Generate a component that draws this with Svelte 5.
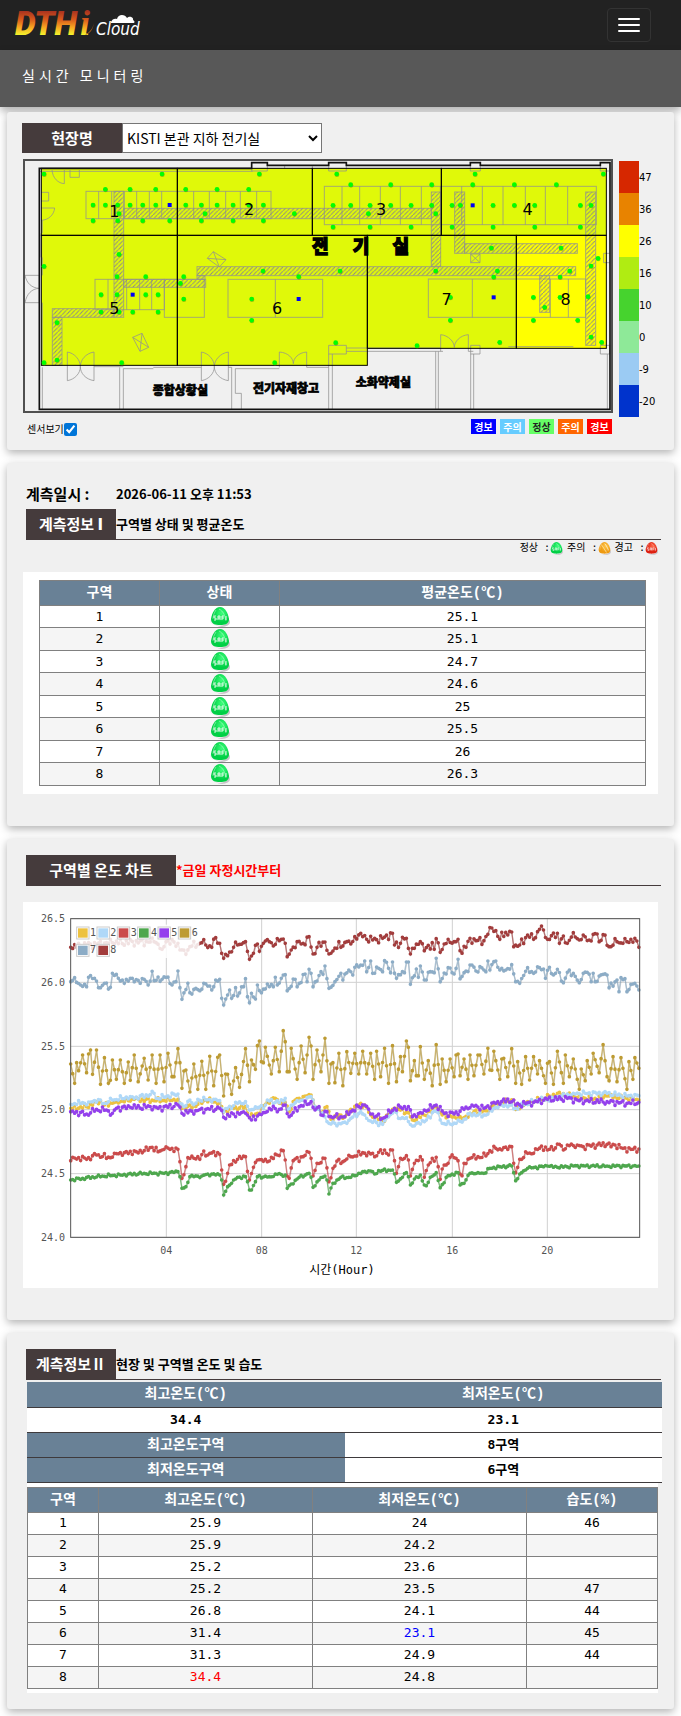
<script>
  let site = 'kisti';
  let showSensors = true;

  const scale = [
    { label: '47', color: '#d62700' },
    { label: '36', color: '#e88300' },
    { label: '26', color: '#ffff00' },
    { label: '16', color: '#b0ec12' },
    { label: '10', color: '#46d32e' },
    { label: '0', color: '#8ee998' },
    { label: '-9', color: '#9bcbf3' },
    { label: '-20', color: '#0033cc' }
  ];

  const levels = [
    { label: '경보', bg: '#0000ff', fg: '#fff' },
    { label: '주의', bg: '#66ccff', fg: '#fff' },
    { label: '정상', bg: '#66ff66', fg: '#222' },
    { label: '주의', bg: '#ff6600', fg: '#fff' },
    { label: '경보', bg: '#ff0000', fg: '#fff' }
  ];

  // x, y, width, height, number x, number y
  const zones = [
    [94, 55, 408, 201, 313, 202],
    [502, 55, 405, 201, 717, 195],
    [907, 55, 387, 201, 1113, 195],
    [1294, 55, 495, 201, 1553, 195],
    [94, 256, 408, 390, 313, 491],
    [502, 256, 570, 390, 801, 491],
    [1072, 256, 447, 339, 1310, 465],
    [1519, 256, 270, 339, 1667, 465]
  ];

  const ducts = [
    [312, 124, 29, 378], [341, 175, 923, 31], [1264, 126, 28, 224], [561, 350, 1136, 27],
    [341, 388, 246, 24], [561, 377, 24, 11], [127, 476, 185, 26], [127, 502, 29, 144],
    [1334, 126, 30, 184], [1364, 281, 338, 29], [1727, 126, 30, 460], [1589, 377, 30, 110]
  ];

  // x, y, width, height, dividers
  const cabinets = [
    [228, 124, 555, 82, [266, 305, 343, 380, 418, 455, 503, 551, 598, 647, 691, 740]],
    [943, 109, 816, 115, [996, 1049, 1111, 1171, 1234, 1291, 1355, 1417, 1479, 1546, 1606, 1673]],
    [255, 388, 208, 91, [294, 350, 389, 425]],
    [463, 388, 120, 114, []],
    [654, 388, 284, 114, [796]],
    [1255, 387, 472, 115, [1387, 1621, 1675]]
  ];

  const sensors = [
    [102, 72], [456, 72], [748, 72], [980, 72], [286, 118], [360, 118], [437, 118], [527, 118],
    [621, 118], [716, 118], [249, 165], [286, 165], [323, 165], [360, 165], [398, 165], [437, 165],
    [527, 165], [574, 165], [621, 165], [669, 165], [716, 165], [760, 165], [327, 191], [585, 191],
    [853, 191], [249, 212], [323, 212], [398, 212], [479, 212], [574, 212], [669, 212], [760, 212],
    [969, 166], [969, 231], [327, 313], [102, 349], [321, 380], [407, 380], [521, 380], [759, 363],
    [990, 363], [866, 380], [511, 400], [273, 434], [321, 434], [407, 434], [444, 434], [521, 447],
    [725, 447], [273, 486], [327, 486], [368, 486], [444, 486], [141, 518], [725, 511], [977, 578],
    [141, 630], [102, 638], [335, 638], [794, 638], [1022, 104], [1142, 104], [1265, 104], [1388, 104],
    [1513, 104], [1639, 104], [1395, 72], [1780, 72], [1022, 166], [1080, 166], [1142, 166], [1203, 166],
    [1265, 166], [1326, 166], [1351, 166], [1449, 166], [1513, 166], [1574, 166], [1711, 166], [1743, 166],
    [1075, 191], [1277, 191], [1080, 231], [1203, 231], [1326, 231], [1449, 231], [1574, 231], [1711, 231],
    [1444, 294], [1653, 294], [1764, 325], [1743, 348], [1277, 363], [1462, 363], [1679, 363], [1451, 381],
    [1650, 381], [1321, 442], [1570, 442], [1650, 442], [1734, 440], [1604, 472], [1321, 511], [1570, 511],
    [1703, 511], [1743, 561], [1469, 577], [1775, 577], [1221, 587]
  ];

  const humiditySensors = [[479, 165], [368, 434], [866, 447], [1388, 166], [1451, 442]];

  const averages = ['25.1', '25.1', '24.7', '24.6', '25', '25.5', '26', '26.3'];

  const details = [
    ['25.9', '24', '46'],
    ['25.9', '24.2', ''],
    ['25.2', '23.6', ''],
    ['25.2', '23.5', '47'],
    ['26.8', '24.1', '44'],
    ['31.4', '23.1', '45'],
    ['31.3', '24.9', '44'],
    ['34.4', '24.8', '']
  ];

  // turning points of each curve as "x,y", filled up to one sample per 5 minutes
  const series = [
    { color: '#edc240', noise: 5, keys: '152,655 200,650 240,632 255,645 290,635 340,628 400,632 475,628 485,655 520,648 560,630 600,638 612,665 640,655 678,650 690,682 715,670 740,635 768,625 780,640 797,638 808,665 825,630 850,620 875,615 885,650 910,665 922,650 930,688 960,675 975,680 990,658 1015,645 1035,645 1050,675 1090,692 1125,655 1165,668 1175,690 1210,675 1250,650 1265,675 1305,680 1330,683 1360,665 1400,662 1430,640 1480,630 1490,658 1520,635 1560,630 1610,610 1660,618 1720,628 1760,618 1820,625 1857,630' },
    { color: '#afd8f8', noise: 5, keys: '152,643 190,638 200,645 215,635 240,630 255,640 280,630 330,620 345,625 400,610 410,625 475,612 482,640 490,650 510,630 520,645 535,628 555,630 580,628 600,632 612,665 620,655 655,640 678,635 690,660 700,658 735,645 745,630 780,638 795,625 803,660 825,638 850,630 875,620 885,650 915,680 925,700 955,700 980,700 990,685 1020,665 1035,675 1050,693 1090,703 1105,680 1125,663 1135,685 1160,683 1175,708 1190,700 1220,690 1240,663 1252,668 1265,700 1290,702 1310,700 1330,688 1350,670 1375,675 1400,675 1420,655 1440,645 1470,645 1490,655 1510,645 1550,630 1600,625 1660,610 1760,610 1820,618 1857,617' },
    { color: '#cb4b4b', noise: 6, keys: '152,812 160,802 200,808 230,795 270,803 285,790 310,788 350,785 375,782 398,772 415,785 430,778 455,775 474,778 480,815 487,865 495,830 505,803 535,800 540,808 552,783 565,795 580,785 600,793 606,840 612,883 620,850 630,825 655,808 678,800 690,870 702,832 715,810 740,815 770,795 790,782 797,810 803,858 809,865 820,812 850,800 868,787 874,805 880,858 893,820 915,805 928,875 940,835 955,808 970,815 990,800 1005,798 1028,788 1040,797 1055,790 1065,800 1075,787 1095,780 1107,795 1118,780 1124,812 1130,850 1142,805 1155,805 1160,797 1166,810 1172,858 1185,820 1202,800 1210,830 1214,862 1225,825 1250,802 1256,830 1261,868 1273,825 1285,820 1290,802 1310,805 1316,812 1321,852 1327,857 1335,820 1350,805 1375,800 1395,798 1410,782 1430,775 1445,780 1477,770 1482,820 1488,848 1500,808 1520,790 1540,790 1565,768 1580,780 1592,770 1603,780 1617,763 1630,780 1643,765 1670,765 1690,770 1730,765 1760,763 1775,770 1788,765 1810,775 1830,778 1857,777' },
    { color: '#4da74d', noise: 3, keys: '152,870 190,865 250,858 300,855 370,850 430,850 474,845 480,860 487,895 495,890 510,860 545,858 565,852 600,855 606,870 612,915 620,890 640,870 650,862 678,860 684,875 690,900 696,900 705,875 715,860 750,860 770,853 797,855 803,895 815,882 835,862 868,850 875,862 880,892 895,870 915,858 922,870 928,912 940,880 960,862 990,862 1005,857 1030,845 1050,843 1065,852 1075,842 1118,840 1124,852 1130,877 1145,862 1160,848 1166,860 1172,885 1185,867 1202,855 1214,885 1220,887 1230,862 1250,848 1261,893 1285,857 1315,848 1321,885 1330,880 1350,850 1375,848 1390,850 1410,835 1440,830 1475,828 1482,848 1488,872 1505,848 1523,835 1580,828 1610,832 1660,828 1760,828 1857,828' },
    { color: '#9440ed', noise: 6, keys: '152,665 200,672 230,658 260,660 275,670 290,655 330,652 400,650 415,655 475,645 487,670 530,662 560,658 600,655 612,682 640,672 675,670 695,690 715,678 730,668 750,655 780,658 795,645 808,680 835,650 875,635 885,660 895,650 905,675 920,665 930,680 975,680 990,665 1015,650 1035,645 1050,672 1090,685 1125,655 1165,650 1175,680 1200,668 1250,645 1270,670 1305,672 1330,658 1357,645 1390,655 1435,635 1480,630 1490,645 1540,637 1580,628 1640,625 1680,632 1760,635 1820,640 1857,637' },
    { color: '#bd9b33', noise: 0, keys: '152,522 165,580 171,518 177,542 189,495 201,548 207,492 213,480 219,553 230,480 242,583 254,503 266,580 273,571 279,510 290,568 302,510 312,580 324,516 332,571 344,495 356,575 372,505 384,570 397,495 409,580 421,495 433,575 445,490 457,560 463,560 475,476 481,518 487,595 493,543 499,540 511,606 523,522 535,598 546,514 557,598 570,499 582,587 594,502 600,495 612,618 618,552 625,553 636,613 648,533 660,592 678,476 690,575 696,510 708,538 714,467 719,453 725,515 731,518 737,472 755,552 767,472 778,545 790,422 797,455 803,545 809,545 815,475 833,568 845,468 857,548 868,442 874,468 880,568 892,480 904,545 916,445 928,580 934,522 940,518 946,578 958,490 970,587 982,485 993,550 1005,490 1017,552 1029,484 1041,552 1053,490 1065,568 1071,484 1083,560 1095,475 1107,580 1118,467 1131,575 1143,500 1148,545 1160,453 1166,472 1172,572 1184,512 1190,557 1196,557 1202,470 1214,568 1226,512 1238,587 1250,464 1261,583 1267,507 1279,575 1291,507 1303,560 1309,495 1315,492 1321,557 1333,507 1345,568 1351,495 1363,557 1375,495 1380,495 1392,552 1404,475 1410,540 1416,541 1422,484 1440,568 1446,507 1452,505 1464,560 1476,476 1488,580 1494,515 1506,583 1518,500 1530,570 1542,500 1554,552 1560,512 1577,580 1583,520 1589,515 1600,583 1613,484 1631,580 1637,495 1650,560 1660,507 1678,598 1684,537 1697,572 1703,512 1715,552 1721,490 1739,548 1750,464 1763,560 1768,572 1780,500 1792,575 1804,503 1822,598 1828,515 1840,568 1846,503 1857,535' },
    { color: '#8cacc6', noise: 6, keys: '152,275 165,263 182,285 200,290 207,262 225,265 242,293 255,280 272,292 279,250 295,265 315,280 330,265 345,275 370,268 385,285 397,244 405,272 440,262 455,285 470,275 475,243 480,293 487,328 505,280 511,308 530,295 542,302 552,280 570,288 576,300 590,270 600,268 606,325 612,345 620,315 630,300 636,325 648,293 655,318 672,290 678,266 684,320 690,338 696,310 708,327 714,285 726,308 745,282 757,290 768,262 772,285 790,255 797,254 803,302 825,268 833,290 855,252 860,275 868,238 875,250 880,290 893,273 900,245 910,253 916,228 928,295 945,275 960,250 970,270 985,240 998,255 1005,232 1020,225 1035,213 1042,245 1053,213 1058,250 1075,235 1088,245 1095,212 1112,248 1120,216 1130,265 1145,245 1155,248 1160,216 1166,216 1172,283 1190,237 1196,262 1202,228 1215,270 1230,245 1245,248 1250,205 1262,275 1285,233 1303,252 1315,208 1322,266 1335,248 1357,225 1370,243 1380,230 1395,245 1405,213 1410,240 1420,215 1430,213 1440,240 1455,240 1477,224 1488,275 1500,280 1523,233 1540,250 1558,233 1572,237 1577,265 1588,232 1600,255 1615,238 1630,278 1640,247 1660,250 1678,278 1690,250 1702,247 1713,275 1720,250 1728,275 1750,253 1762,255 1768,293 1790,270 1798,305 1804,263 1815,266 1822,305 1830,283 1845,280 1857,300' },
    { color: '#a23c3c', noise: 8, keys: '152,172 200,165 280,158 400,155 410,158 425,178 440,155 475,160 482,180 498,193 510,170 545,158 557,165 575,172 588,143 600,160 612,205 625,197 640,172 655,165 670,158 678,155 688,208 700,190 713,162 718,184 730,160 750,155 758,168 775,152 790,147 797,160 803,200 815,180 833,155 850,160 868,140 880,192 892,172 916,156 925,192 940,183 955,155 965,172 980,155 995,162 1005,140 1022,130 1040,148 1060,150 1090,145 1118,130 1125,165 1140,160 1150,142 1160,145 1172,192 1185,175 1202,155 1215,182 1237,158 1243,178 1250,146 1260,187 1285,148 1305,155 1315,148 1322,182 1338,172 1350,145 1370,152 1390,152 1405,133 1417,114 1430,122 1440,148 1445,127 1465,135 1477,126 1482,170 1500,165 1522,135 1540,148 1560,118 1572,120 1580,148 1595,137 1613,130 1620,160 1630,138 1640,160 1657,128 1675,150 1690,135 1710,150 1732,132 1740,155 1752,134 1765,170 1790,155 1810,160 1845,145 1857,172' }
  ].map((s, n) => {
    const keys = s.keys.split(' ').map((pair) => {
      const [x, y] = pair.split(',').map(Number);
      return [Math.round((x - 152) / 5.96), y];
    });
    const points = [];
    let k = 0;
    for (let i = 0; i < 287; i++) {
      while (k < keys.length - 2 && keys[k + 1][0] <= i) k++;
      const [i0, y0] = keys[k];
      const [i1, y1] = keys[k + 1];
      const t = i1 > i0 ? Math.min(1, (i - i0) / (i1 - i0)) : 1;
      const onKey = i === i0 || i === i1;
      const wave = onKey ? 0 : Math.sin(i * 2.4 + n) + Math.sin(i * 5.1 + n * 3) * 0.6;
      points.push([(152 + i * 5.96).toFixed(1), (y0 + (y1 - y0) * t + wave * s.noise).toFixed(1)]);
    }
    return {
      color: s.color,
      line: 'M' + points.map((p) => p.join(' ')).join('L'),
      dots: points.map((p) => `M${p[0]} ${p[1]}h0`).join('')
    };
  });

  const hours = [['04', 439], ['08', 725], ['12', 1009], ['16', 1297], ['20', 1582]];
  const temps = [['26.5', 86], ['26.0', 277], ['25.5', 469], ['25.0', 659], ['24.5', 851], ['24.0', 1042]];
</script>

{#snippet status(kind)}
  <svg class="status" viewBox="0 0 20 20" role="img" aria-label={kind}>
    <ellipse cx="12" cy="15" rx="8" ry="5" fill="#c9c4c9" />
    <ellipse cx="9" cy="14" rx="9" ry="5" fill="#f4f2f5" />
    <path d="M10 0C5 0 2 6 1 12C1 17 5 18 10 18S19 17 19 12C18 6 15 0 10 0Z" fill="url(#egg-{kind})" />
    <path d="M6 3C4 6 3 9 3 12M9 2C13 4 15 8 16 14" fill="none" stroke="#fff" stroke-opacity=".4" />
    {#if kind === 'caution'}
      <path d="M6 5L13 16M11 3L16 12" stroke="#fff1c4" fill="none" />
    {:else}
      <path d="M6 9H4v2h2v2H4M8 13v-4h2v4M8 11h2M12 9v4M12 9h2M12 11h2M16 9v4" stroke="#fff" stroke-opacity=".85" fill="none" />
    {/if}
  </svg>
{/snippet}

<svg class="defs" aria-hidden="true">
  <defs>
    <radialGradient id="egg-normal" cx=".6" cy=".35"><stop offset="0" stop-color="#3cff7a" /><stop offset="1" stop-color="#00cf45" /></radialGradient>
    <radialGradient id="egg-caution" cx=".6" cy=".35"><stop offset="0" stop-color="#ffc54a" /><stop offset="1" stop-color="#ee9a10" /></radialGradient>
    <radialGradient id="egg-warning" cx=".6" cy=".35"><stop offset="0" stop-color="#ff6a4a" /><stop offset="1" stop-color="#dd1f10" /></radialGradient>
  </defs>
</svg>

<header class="navbar">
  <a class="brand" href="#home" aria-label="DTHi Cloud">
    <svg width="136" height="50" viewBox="0 0 136 50">
      <defs>
        <linearGradient id="fire" gradientUnits="userSpaceOnUse" x1="0" y1="11" x2="0" y2="36">
          <stop offset="0" stop-color="#a8321f" />
          <stop offset=".35" stop-color="#d95b1c" />
          <stop offset=".65" stop-color="#f7a521" />
          <stop offset="1" stop-color="#f2ff2e" />
        </linearGradient>
      </defs>
      <text x="4" y="35" class="brand-main" fill="url(#fire)">DTH</text>
      <text x="69" y="35" class="brand-i" fill="url(#fire)">i</text>
      <path d="M75 34C79 32 82 28 83 23C82 29 79 34 74 35Z" fill="#b8641c" />
      <text x="85" y="35" class="brand-sub" fill="#fff">Cloud</text>
      <path d="M100 22C101 19 104 18 106 19C107 14 114 14 116 18C119 15 123 18 122 20C124 21 124 23 122 23H100Z" fill="#fff" />
    </svg>
  </a>
  <button class="toggle" type="button" aria-label="메뉴">
    <span></span><span></span><span></span>
  </button>
</header>

<div class="page-title"><h1>실시간 모니터링</h1></div>

<main>
  <section class="card plan-card">
    <div class="site">
      <label for="site">현장명</label>
      <select id="site" bind:value={site}>
        <option value="kisti">KISTI 본관 지하 전기실</option>
      </select>
    </div>

    <div class="plan-row">
      <div class="plan-col">
        <svg class="plan" viewBox="45 33 1758 750">
          <defs>
            <pattern id="hatch" width="13" height="13" patternUnits="userSpaceOnUse">
              <path d="M0 13L13 0" stroke="#8f8f80" stroke-width="3" />
            </pattern>
          </defs>

          {#each zones as [x, y, width, height], i}
            <rect {x} {y} {width} {height} fill={i === 7 ? '#ffff00' : '#e0f909'} />
          {/each}

          <g class="thin">
            {#each cabinets as [x, y, width, height, dividers]}
              <rect {x} {y} {width} {height} />
              {#each dividers as d}
                <path d="M{d} {y}v{height}" />
              {/each}
            {/each}
            {#each ducts as [x, y, width, height]}
              <rect {x} {y} {width} {height} class="duct" />
            {/each}
            <path d="M126 60C128 85 145 100 163 101V60M180 60v22h28V60M94 127h22v26H94M94 174h40C132 195 115 210 94 211M97 211v38M97 322v54M97 458v188" />
            <path d="M94 250v72" stroke-width="5" />
            <path d="M45 376h43v82H45M45 376C50 400 65 414 88 415C65 416 50 432 45 458" />
            <path d="M172 606v86M252 606v86M172 606C195 610 211 630 211 650C211 670 195 688 172 692M252 606C227 610 211 630 211 650C211 670 227 688 252 692" />
            <path d="M574 606v86M655 606v86M574 606C597 610 613 630 613 650C613 670 597 688 574 692M655 606C630 610 613 630 613 650C613 670 630 688 655 692" />
            <path d="M808 652v-46C835 608 850 625 850 641C850 625 865 608 890 606v46h66" />
            <path d="M1292 604v-50C1315 556 1333 575 1333 592C1333 575 1350 556 1375 554v50" />
            <path d="M592 325l18-20 38 24-20 22zM592 325l56 4M610 305l18 46M368 562l28-12 20 42-26 12zM368 562l48 30M396 550l-6 54M1382 312h28v26h-28zM1382 312l28 26M1410 312l-28 26" />
            <path d="M97 652v126M329 652v126M340 656v122M252 650h88M340 656h90M430 652h144M655 652h10v126M676 656v74h18v48M676 656h132M956 778V586h53v26h-53M967 612v166M1009 594h283M1009 604h290M1277 604v174M1285 604v174M1382 612v166M1391 612v166M1382 586h28v26h-28zM1771 586h28v26h-28zM1799 310h-18v28h18M1792 612v166M1375 604h15" />
            <path d="M88 64h640M824 46v9M907 46v9M725 55v8h47v-17M956 46v17h53V46M1381 46v17h30V46M1771 46v17h28" />
            <path d="M1495 590h195" />
          </g>

          <g class="room">
            <text x="931" y="309" class="room-big">전</text>
            <text x="1053" y="309" class="room-big">기</text>
            <text x="1172" y="309" class="room-big">실</text>
            <text x="511" y="734">종합상황실</text>
            <text x="828" y="730">전기자재창고</text>
            <text x="1120" y="711">소화약제실</text>
          </g>

          {#each zones as [x, y, width, height]}
            <rect {x} {y} {width} {height} fill="none" stroke="#000" stroke-width="3" />
          {/each}
          <path d="M88 55H725V38H772V46H956V38H1009V46H1381V38H1411V46H1771V38H1800V778H88Z" fill="none" stroke="#111" stroke-width="5" />
          {#if showSensors}
            {#each sensors as [cx, cy]}
              <circle cx={cx + 1} cy={cy + 2} r="7" fill="#5b8a00" opacity=".5" />
              <circle {cx} {cy} r="7" fill="#00ff00" />
            {/each}
            {#each humiditySensors as [x, y]}
              <rect x={x - 6} y={y - 6} width="12" height="12" fill="#0000f5" />
            {/each}
          {/if}
          {#each zones as [, , , , x, y], i}
            <text {x} {y} class="zone-no">{i + 1}</text>
          {/each}
        </svg>

        <div class="plan-foot">
          <div class="sensor-toggle">
            <label for="sensors">센서보기</label>
            <input id="sensors" type="checkbox" bind:checked={showSensors} />
          </div>
          <div class="levels">
            {#each levels as level}
              <span style="background: {level.bg}; color: {level.fg}">{level.label}</span>
            {/each}
          </div>
        </div>
      </div>

      <ul class="scale">
        {#each scale as step}
          <li><i style="background: {step.color}"></i>{step.label}</li>
        {/each}
      </ul>
    </div>
  </section>

  <section class="card">
    <p class="measured"><span>계측일시 :</span><time>2026-06-11 오후 11:53</time></p>
    <div class="head">
      <h2>계측정보 <span class="numeral">Ⅰ</span></h2>
      <p>구역별 상태 및 평균온도</p>
    </div>
    <div class="status-key">
      <span>정상 :</span>{@render status('normal')}
      <span>주의 :</span>{@render status('caution')}
      <span>경고 :</span>{@render status('warning')}
    </div>
    <div class="panel zone-panel">
      <table class="grid zone-table">
        <thead>
          <tr><th>구역</th><th>상태</th><th>평균온도(℃)</th></tr>
        </thead>
        <tbody>
          {#each averages as temp, i}
            <tr>
              <td>{i + 1}</td>
              <td>{@render status('normal')}</td>
              <td>{temp}</td>
            </tr>
          {/each}
        </tbody>
      </table>
    </div>
  </section>

  <section class="card">
    <div class="head">
      <h2 class="wide">구역별 온도 차트</h2>
      <p class="note">*금일 자정시간부터</p>
    </div>
    <div class="panel chart-panel">
      <svg class="chart" viewBox="9 36 1905 1158">
        {#each hours as [label, x]}
          <path d="M{x} 86V1042" class="gridline" />
          <text {x} y="1092" text-anchor="middle">{label}</text>
        {/each}
        {#each temps as [label, y]}
          <path d="M152 {y}H1859" class="gridline" />
          <text x="135" y={y + 11} text-anchor="end">{label}</text>
        {/each}
        {#each series as s}
          <path d={s.line} fill="none" stroke="#000" stroke-opacity=".15" stroke-width="4" transform="translate(1 3)" />
          <path d={s.line} fill="none" stroke={s.color} stroke-opacity=".65" stroke-width="4" />
          <path d={s.dots} fill="none" stroke={s.color} stroke-width="11" stroke-linecap="round" />
        {/each}
        <rect x="152" y="86" width="1707" height="956" fill="none" stroke="#545454" stroke-width="3" />
        <rect x="166" y="104" width="372" height="100" fill="#fff" fill-opacity=".85" />
        {#each series as s, i}
          <rect x={170 + (i % 6) * 61} y={i < 6 ? 111 : 163} width="37" height="36" fill="#fff" stroke="#ccc" stroke-width="3" />
          <rect x={174 + (i % 6) * 61} y={i < 6 ? 115 : 167} width="29" height="28" fill={s.color} />
          <text x={210 + (i % 6) * 61} y={i < 6 ? 138 : 189}>{i + 1}</text>
        {/each}
        <text x="966" y="1152" text-anchor="middle" class="axis-title">시간(Hour)</text>
      </svg>
    </div>
  </section>

  <section class="card">
    <div class="head">
      <h2>계측정보Ⅱ</h2>
      <p>현장 및 구역별 온도 및 습도</p>
    </div>
    <table class="summary">
      <tbody>
        <tr><th>최고온도(℃)</th><th>최저온도(℃)</th></tr>
        <tr><td>34.4</td><td>23.1</td></tr>
        <tr><th>최고온도구역</th><td>8구역</td></tr>
        <tr><th>최저온도구역</th><td>6구역</td></tr>
      </tbody>
    </table>
    <div class="detail-panel">
      <table class="grid detail-table">
        <thead>
          <tr><th>구역</th><th>최고온도(℃)</th><th>최저온도(℃)</th><th>습도(%)</th></tr>
        </thead>
        <tbody>
          {#each details as [high, low, humidity], i}
            <tr>
              <td>{i + 1}</td>
              <td class:hot={high === '34.4'}>{high}</td>
              <td class:cold={low === '23.1'}>{low}</td>
              <td>{humidity}</td>
            </tr>
          {/each}
        </tbody>
      </table>
    </div>
  </section>
</main>

<style>
  :global(body) {
    background: #fff;
    color: #000;
    font-family: "Noto Sans CJK KR", sans-serif;
    font-size: 14px;
    line-height: 20px;
  }

  h1, h2, p, ul {
    margin: 0;
    padding: 0;
  }

  .defs {
    position: absolute;
    width: 0;
    height: 0;
  }

  .navbar {
    display: flex;
    justify-content: space-between;
    align-items: center;
    height: 50px;
    padding: 0 30px 0 11px;
    background: #222;
  }

  .brand svg {
    display: block;
  }

  .brand-main {
    font: italic 900 33px Roboto, sans-serif;
  }

  .brand-i {
    font: italic bold 36px "Liberation Serif", serif;
  }

  .brand-sub {
    font: italic 18px "DejaVu Sans Condensed", "Open Sans", sans-serif;
    font-size: 17px;
  }

  .toggle {
    display: flex;
    flex-direction: column;
    gap: 4px;
    padding: 9px 10px;
    border: 1px solid #333;
    border-radius: 4px;
    background: transparent;
    cursor: pointer;
  }

  .toggle span {
    width: 22px;
    height: 2px;
    border-radius: 1px;
    background: #fff;
  }

  .page-title {
    height: 57px;
    padding: 0 22px;
    background: #585858;
    box-shadow: 0 4px 8px rgba(0, 0, 0, 0.3);
  }

  .page-title h1 {
    color: #fff;
    font-size: 14px;
    font-weight: normal;
    line-height: 50px;
    letter-spacing: 4px;
  }

  main {
    display: flex;
    flex-direction: column;
    gap: 13px;
    padding: 5px 7px 7px;
  }

  .card {
    padding: 16px 13px 32px 19px;
    border-radius: 3px;
    background: #f0f0f0;
    box-shadow: 0 3px 8px rgba(0, 0, 0, 0.3);
  }

  .plan-card {
    padding: 11px 15px 14px;
  }

  .site {
    display: flex;
    margin-bottom: 6px;
  }

  .site label {
    width: 100px;
    background: #453b3c;
    color: #fff;
    font-size: 15px;
    font-weight: bold;
    line-height: 30px;
    text-align: center;
  }

  .site select {
    width: 200px;
    height: 30px;
    border: 1px solid #767676;
    border-radius: 0;
    background: #fff;
    color: #000;
    font: 14px "Noto Sans CJK KR", sans-serif;
  }

  .plan-row {
    display: flex;
    gap: 6px;
    margin-left: 1px;
  }

  .plan-col {
    flex: 1;
    min-width: 0;
  }

  .plan {
    display: block;
    box-sizing: border-box;
    width: 100%;
    border: 2px solid #505050;
  }

  .thin {
    fill: none;
    stroke: #909090;
    stroke-opacity: 0.75;
    stroke-width: 3;
  }

  .duct {
    fill: url(#hatch);
  }

  .room {
    font: 900 36px "Noto Sans CJK KR", sans-serif;
    text-anchor: middle;
    stroke: #000;
    stroke-width: 2;
  }

  .room-big {
    font-size: 54px;
    stroke-width: 4;
  }

  .zone-no {
    font: 48px "DejaVu Sans", sans-serif;
    text-anchor: middle;
  }

  .plan-foot {
    display: flex;
    justify-content: space-between;
    align-items: flex-start;
    margin-top: 6px;
    padding: 0 1px 0 4px;
  }

  .sensor-toggle {
    display: flex;
    align-items: center;
    padding-top: 3px;
    font-size: 10px;
    line-height: 14px;
  }

  .sensor-toggle input {
    width: 13px;
    height: 13px;
    margin: 0;
    accent-color: #0075d8;
  }

  .levels {
    display: flex;
    gap: 4px;
  }

  .levels span {
    width: 25px;
    font-size: 10px;
    font-weight: bold;
    line-height: 15px;
    text-align: center;
  }

  .scale {
    width: 40px;
    padding-top: 2px;
    list-style: none;
  }

  .scale li {
    display: flex;
    align-items: center;
    height: 32px;
    font: 10px "DejaVu Sans", sans-serif;
  }

  .scale i {
    width: 20px;
    height: 32px;
  }

  .measured {
    display: flex;
    margin-bottom: 5px;
    padding-top: 5px;
    font-weight: bold;
  }

  .measured span {
    width: 90px;
    font-size: 15px;
  }

  .measured time {
    font-size: 13px;
  }

  .head {
    display: flex;
    border-bottom: 1px solid #453b3c;
  }

  .head h2 {
    width: 90px;
    background: #453b3c;
    color: #fff;
    font-size: 15px;
    line-height: 30px;
    text-align: center;
    white-space: nowrap;
  }

  .head h2.wide {
    width: 150px;
  }

  .numeral {
    font-family: "DejaVu Sans", sans-serif;
    line-height: 20px;
  }

  .head p {
    font-size: 13px;
    font-weight: bold;
    line-height: 30px;
  }

  .head .note {
    color: #f00;
  }

  .status {
    width: 20px;
    height: 20px;
    vertical-align: top;
  }

  .status-key {
    display: flex;
    justify-content: flex-end;
    align-items: center;
    height: 16px;
    padding-right: 3px;
    font-family: "DejaVu Sans Mono", "Noto Sans CJK KR", monospace;
    font-size: 10px;
  }

  .status-key span {
    margin-left: 4px;
  }

  .status-key .status {
    width: 13px;
    height: 13px;
  }

  .panel {
    margin: 16px 3px 0 -3px;
    background: #fff;
  }

  .zone-panel {
    padding: 8px 12px 8px 16px;
  }

  .chart {
    display: block;
    width: 100%;
    font: 30px "DejaVu Sans Mono", monospace;
    fill: #545454;
  }

  .gridline {
    fill: none;
    stroke: #d0d0d0;
    stroke-width: 3;
  }

  .axis-title {
    font: 36px "DejaVu Sans Mono", "Noto Sans CJK KR", monospace;
    fill: #000;
  }

  table {
    width: 100%;
    border-collapse: collapse;
    table-layout: fixed;
    text-align: center;
    font-family: "DejaVu Sans Mono", "Noto Sans CJK KR", monospace;
    font-size: 13px;
    line-height: 20px;
  }

  th, td {
    padding: 0;
  }

  th {
    background: #698196;
    color: #fff;
    font-family: "Liberation Mono", "Noto Sans CJK KR", monospace;
    font-size: 14px;
  }

  .grid {
    background: #fff;
  }

  .grid th, .grid td {
    box-sizing: border-box;
    height: 22px;
    border: 1px solid #808080;
  }

  .grid th {
    height: 25px;
  }

  .grid tbody tr:nth-child(even) {
    background: #f5f5f5;
  }

  .zone-table tbody tr:nth-child(even) td {
    height: 23px;
  }

  .zone-table th:nth-child(-n + 2) {
    width: 120px;
  }

  .summary {
    width: auto;
    min-width: 100%;
    margin: 2px -1px 0 1px;
    background: #fff;
    font-weight: bold;
  }

  .summary th, .summary td {
    box-sizing: border-box;
    width: 50%;
    height: 25px;
    border-bottom: 1px solid #3e3a3c;
  }

  .detail-panel {
    margin: 0 3px -16px 1px;
    padding: 4px 0;
    background: #fff;
  }

  .detail-table th:first-child {
    width: 71px;
  }

  .detail-table th:last-child {
    width: 131px;
  }

  .hot {
    color: #f00;
  }

  .cold {
    color: #00f;
  }
</style>
